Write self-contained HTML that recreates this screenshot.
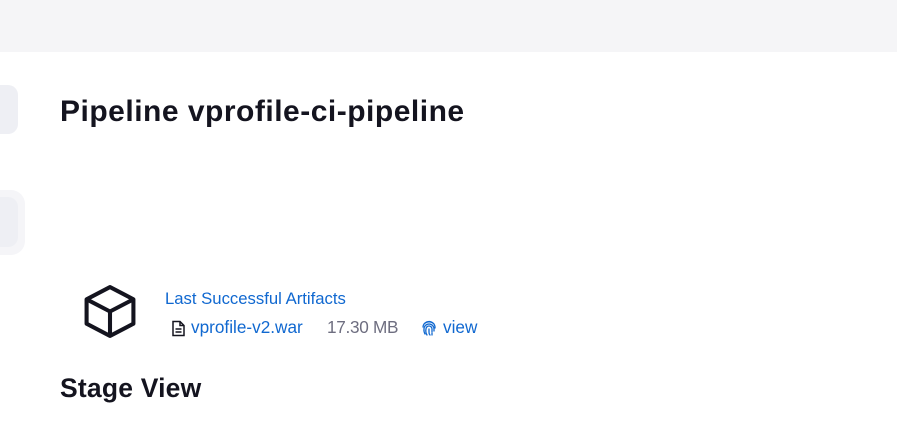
<!DOCTYPE html>
<html><head><style>
body{margin:0;width:897px;height:428px;background:#fff;font-family:"Liberation Sans",sans-serif;position:relative;overflow:hidden;color:#14141f}
.top{position:absolute;left:0;top:0;width:897px;height:52px;background:#f5f5f7}
.s1{position:absolute;left:-20px;top:85px;width:38px;height:49px;border-radius:10px;background:#eeeff4}
.s2o{position:absolute;left:-20px;top:190px;width:45px;height:65px;border-radius:14px;background:#f5f5f8}
.s2{position:absolute;left:-20px;top:197px;width:38px;height:50px;border-radius:10px;background:#eeeff4}
h1{position:absolute;left:60px;top:95px;margin:0;font-size:30px;font-weight:bold;letter-spacing:0.5px;white-space:nowrap}
h2{position:absolute;left:60px;top:373px;margin:0;font-size:26.5px;font-weight:bold;letter-spacing:0.2px}
a{color:#1068d0;text-decoration:none}
.l1{position:absolute;left:165px;top:289px;font-size:16.7px}
.t{position:absolute;top:317px;font-size:17.2px;white-space:nowrap}
.gray{color:#6e6e80}
</style></head><body>
<div class="top"></div>
<div class="s1"></div>
<div class="s2o"></div><div class="s2"></div>
<h1>Pipeline vprofile-ci-pipeline</h1>
<svg style="position:absolute;left:81px;top:283px" width="58" height="57" viewBox="0 0 56 56" fill="none" stroke="#14141f" stroke-width="4" stroke-linejoin="round"><path d="M28 4 L51 16 L51 40 L28 52 L5 40 L5 16 Z"/><path d="M5 16 L28 28 L51 16 M28 28 L28 52"/></svg>
<a class="l1">Last Successful Artifacts</a>
<svg style="position:absolute;left:171px;top:320px" width="15" height="17" viewBox="0 0 15 17" fill="none" stroke="#14141f" stroke-width="1.5"><path d="M2 1.5h7l4 4v10H2z M9 1.5v4h4"/><path d="M4.5 9h6M4.5 12h6"/></svg>
<a class="t" style="left:191px">vprofile-v2.war</a>
<span class="t gray" style="left:327px;letter-spacing:-0.3px">17.30 MB</span>
<svg style="position:absolute;left:421px;top:320px" width="16" height="17" viewBox="0 0 16 17" fill="none" stroke="#1068d0" stroke-width="1.3" stroke-linecap="round"><path d="M3 4a7 7 0 0 1 10 0M2 7a6 6 0 0 1 12 1M4 14a8 8 0 0 1-1-5a5 5 0 0 1 10 0v2M6 15a8 8 0 0 1-1-6a3 3 0 0 1 6 0v3M8 9v3a4 4 0 0 0 1 3M11 13v2"/></svg>
<a class="t" style="left:443px">view</a>
<h2>Stage View</h2>
</body></html>
